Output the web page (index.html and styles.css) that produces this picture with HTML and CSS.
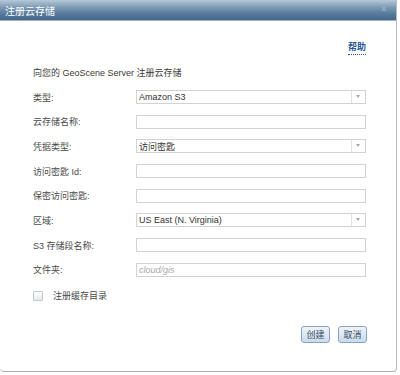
FILE: index.html
```html
<!DOCTYPE html>
<html>
<head>
<meta charset="utf-8">
<link rel="stylesheet" href="styles.css">
</head>
<body>
<div class="dialog">
  <div class="titlebar">
    <span class="title">注册云存储</span>
    <span class="close">x</span>
  </div>
  <div class="content">
    <div class="helprow"><a class="help">帮助</a></div>
    <div class="intro">向您的 GeoScene Server 注册云存储</div>
    <div class="form">
      <div class="row"><label>类型:</label><div class="field select"><span class="val">Amazon S3</span><span class="arrow"></span></div></div>
      <div class="row"><label>云存储名称:</label><div class="field"></div></div>
      <div class="row"><label>凭据类型:</label><div class="field select"><span class="val">访问密匙</span><span class="arrow"></span></div></div>
      <div class="row"><label>访问密匙 Id:</label><div class="field"></div></div>
      <div class="row"><label>保密访问密匙:</label><div class="field"></div></div>
      <div class="row"><label>区域:</label><div class="field select"><span class="val">US East (N. Virginia)</span><span class="arrow"></span></div></div>
      <div class="row"><label>S3 存储段名称:</label><div class="field"></div></div>
      <div class="row"><label>文件夹:</label><div class="field"><span class="val ph">cloud/gis</span></div></div>
    </div>
    <div class="checkrow"><span class="box"></span><span class="clabel">注册缓存目录</span></div>
    <div class="buttons"><button class="btn">创建</button><button class="btn">取消</button></div>
  </div>
</div>
</body>
</html>
```
FILE: styles.css
```css
html, body { margin: 0; padding: 0; background: #fff; }
body {
  font-family: "Liberation Sans", "Noto Sans CJK SC", sans-serif;
  font-size: 9px;
  color: #4a4a4a;
}
.dialog {
  width: 397px;
  height: 372px;
  border-right: 1px solid #b9b9b9;
  border-bottom: 1px solid #b0b0b0;
  border-bottom-right-radius: 4px;
  border-bottom-left-radius: 4px;
  box-sizing: border-box;
  display: flex;
  flex-direction: column;
}
.titlebar {
  height: 21px;
  background: linear-gradient(#b7c9d8 0%, #7e9cb6 35%, #56799a 70%, #456a8b 100%);
  border-bottom: 1px solid #9fb3c4;
  display: flex;
  align-items: center;
  justify-content: space-between;
  padding: 0 10px 0 5px;
  box-sizing: border-box;
}
.title { color: #fff; font-size: 10px; font-family: "Noto Sans CJK SC", sans-serif; }
.close { color: #a9bccd; font-size: 9px; margin-bottom: 5px; }
.content { flex: 1; padding: 0 29px 0 33px; display: flex; flex-direction: column; }
.helprow { display: flex; justify-content: flex-end; margin-top: 21px; height: 13px; padding-right: 1px; }
.help { color: #2a5b95; font-size: 9px; border-bottom: 1px dotted #2a5b95; line-height: 11px; font-weight: bold; }
.intro { margin-top: 11px; height: 14px; line-height: 14px; color: #3a3a3a; }
.form { margin-top: 10px; display: flex; flex-direction: column; gap: 10.7px; }
.row { display: flex; align-items: center; height: 14px; }
.row label { width: 103px; color: #4a4a4a; }
.field {
  width: 230px; height: 14px;
  border: 1px solid #d2d2d2;
  box-sizing: border-box;
  display: flex; align-items: center;
  background: #fff;
}
.val { padding-left: 2px; color: #333; flex: 1; }
.ph { color: #aaa; font-style: italic; }
.arrow {
  width: 14px; height: 12px; border-left: 1px solid #e2e2e2;
  position: relative; box-sizing: border-box;
}
.arrow::after {
  content: ""; position: absolute; left: 4px; top: 4px;
  border-left: 2.5px solid transparent; border-right: 2.5px solid transparent;
  border-top: 3px solid #9ab;
}
.checkrow { display: flex; align-items: center; margin-top: 12px; height: 14px; }
.box {
  width: 10px; height: 10px; border: 1px solid #c5c9cf; border-radius: 1px;
  background: linear-gradient(#fff, #e4e9ef); box-sizing: border-box;
}
.clabel { margin-left: 10px; }
.buttons { margin-top: auto; margin-bottom: 28px; display: flex; justify-content: flex-end; gap: 8px; }
.btn {
  font-family: "Noto Sans CJK SC", sans-serif; font-size: 9px; color: #3a4a5a;
  height: 17px; width: 29px; padding: 0;
  border: 1px solid #8aa2bd; border-radius: 3px;
  background: linear-gradient(#eef4fb, #c9dbee);
  line-height: 14px;
}
```
